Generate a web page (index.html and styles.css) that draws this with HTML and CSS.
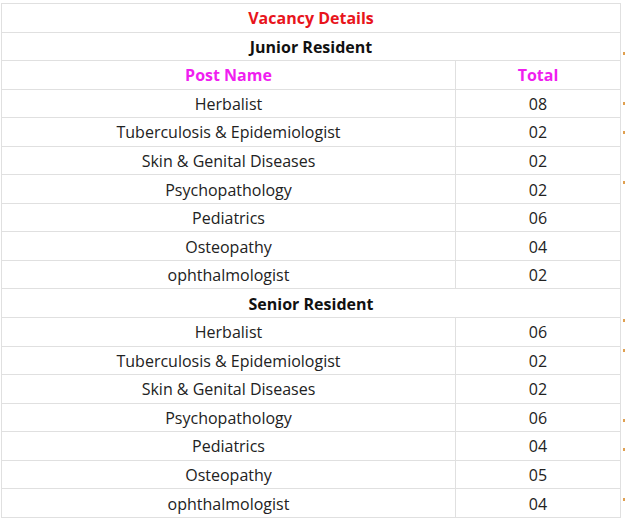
FILE: index.html
```html
<!DOCTYPE html>
<html>
<head>
<meta charset="utf-8">
<link rel="stylesheet" href="styles.css">
</head>
<body>
<div class="wrap">
<table class="vac">
  <tr><td colspan="2" class="title">Vacancy Details</td></tr>
  <tr><td colspan="2" class="section">Junior Resident</td></tr>
  <tr><td class="head">Post Name</td><td class="head num">Total</td></tr>
  <tr><td>Herbalist</td><td class="num">08</td></tr>
  <tr><td>Tuberculosis &amp; Epidemiologist</td><td class="num">02</td></tr>
  <tr><td>Skin &amp; Genital Diseases</td><td class="num">02</td></tr>
  <tr><td>Psychopathology</td><td class="num">02</td></tr>
  <tr><td>Pediatrics</td><td class="num">06</td></tr>
  <tr><td>Osteopathy</td><td class="num">04</td></tr>
  <tr><td>ophthalmologist</td><td class="num">02</td></tr>
  <tr><td colspan="2" class="section">Senior Resident</td></tr>
  <tr><td>Herbalist</td><td class="num">06</td></tr>
  <tr><td>Tuberculosis &amp; Epidemiologist</td><td class="num">02</td></tr>
  <tr><td>Skin &amp; Genital Diseases</td><td class="num">02</td></tr>
  <tr><td>Psychopathology</td><td class="num">06</td></tr>
  <tr><td>Pediatrics</td><td class="num">04</td></tr>
  <tr><td>Osteopathy</td><td class="num">05</td></tr>
  <tr><td>ophthalmologist</td><td class="num">04</td></tr>
</table>
<span class="dot" style="top:52px"></span>
<span class="dot" style="top:102px"></span>
<span class="dot" style="top:131px"></span>
<span class="dot" style="top:181px"></span>
<span class="dot" style="top:319px"></span>
<span class="dot" style="top:349px"></span>
<span class="dot" style="top:419px"></span>
<span class="dot" style="top:448px"></span>
<span class="dot" style="top:498px"></span>
</div>
</body>
</html>
```
FILE: styles.css
```css
html, body {
  margin: 0;
  padding: 0;
  background: #fff;
}
.wrap {
  position: relative;
  padding: 3px 0 0 1px;
  width: 625px;
  height: 522px;
  box-sizing: border-box;
}
.vac {
  border-collapse: collapse;
  width: 620px;
  font-family: "Open Sans", "Noto Sans", sans-serif;
  font-size: 16px;
  color: #222;
}
.vac td {
  border: 1px solid #e0e0e0;
  text-align: center;
  height: 28.55px;
  padding: 1px 4px 0;
  box-sizing: border-box;
  line-height: 20px;
}
.vac td.num {
  width: 165px;
}
.title {
  color: #e8141c;
  font-weight: 700;
}
.section {
  font-weight: 700;
  color: #111;
}
.head {
  color: #f01ef0;
  font-weight: 700;
}
.dot {
  position: absolute;
  left: 623px;
  width: 2px;
  height: 3px;
  background: #e0a050;
}
```
